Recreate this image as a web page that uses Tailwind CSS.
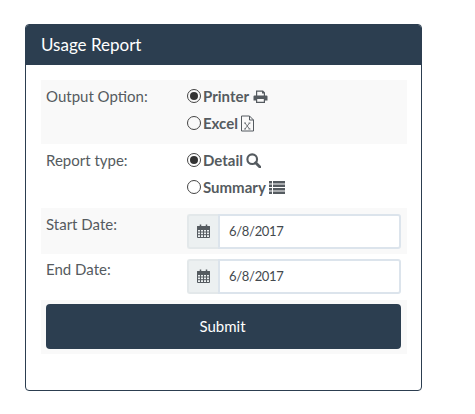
<!DOCTYPE html>
<html lang="en">
<head>
<meta charset="UTF-8">
<title>Usage Report</title>
<script src="https://cdn.jsdelivr.net/npm/@tailwindcss/browser@4"></script>
</head>
<body class="bg-white font-['Lato',sans-serif] text-[15px] text-[#555b60]">
<div class="pt-[24px] pl-[25px]">
  <div class="w-[397px] h-[367px] rounded-[4px] border border-[#2c3e50] bg-white overflow-hidden">
    <div class="h-[40px] bg-[#2c3e50] pl-[15px] text-[17px] leading-[40px] text-white">Usage Report</div>

    <div class="pt-[15px] pl-[15px] w-[381px]">
      <!-- output option -->
      <div class="flex h-[64px] bg-[#f9f9f9] pl-[5px]">
        <div class="w-[141px] pt-[6px] leading-[20px]">Output Option:</div>
        <div>
          <div class="flex items-center h-[20px] mt-[6px] font-bold">
            <span class="w-[14px] h-[14px] rounded-full border border-[#444] flex items-center justify-center mr-[2px]"><span class="w-[8px] h-[8px] rounded-full bg-[#333]"></span></span>
            Printer
            <svg class="ml-[4px] w-[15px] h-[15px]" viewBox="0 0 15 14" fill="#555b60"><path d="M3 1h7l2 2v3h-1.200V4H9V2.200H4.200V6H3zM1.500 6h12a1 1 0 0 1 1 1v4h-2.500v2.500H3V11H.5V7a1 1 0 0 1 1-1zM4.200 9.500v2.800h6.600V9.500z"/></svg>
          </div>
          <div class="flex items-center h-[20px] mt-[7px] font-bold">
            <span class="w-[14px] h-[14px] rounded-full border border-[#444] mr-[2px]"></span>
            Excel
            <svg class="ml-[2px] w-[15px] h-[17px]" viewBox="0 0 15 17" fill="none" stroke="#555b60" stroke-width="1"><path d="M1.500 1h8l4 4v11h-12zM9.500 1v4h4"/><path d="M5 8l4.500 6M9.500 8L5 14M4 14h2M8.500 14h2M4 8h2M8.500 8h2" stroke-width=".8"/></svg>
          </div>
        </div>
      </div>

      <!-- report type -->
      <div class="flex h-[64px] pl-[5px]">
        <div class="w-[141px] pt-[6px] leading-[20px]">Report type:</div>
        <div>
          <div class="flex items-center h-[20px] mt-[6px] font-bold">
            <span class="w-[14px] h-[14px] rounded-full border border-[#444] flex items-center justify-center mr-[2px]"><span class="w-[8px] h-[8px] rounded-full bg-[#333]"></span></span>
            Detail
            <svg class="ml-[3px] w-[15px] h-[15px]" viewBox="0 0 14 14" fill="none" stroke="#555b60" stroke-width="2"><circle cx="5.800" cy="5.800" r="4.500"/><path d="M9 9l4 4" stroke-width="2.600" stroke-linecap="round"/></svg>
          </div>
          <div class="flex items-center h-[20px] mt-[7px] font-bold">
            <span class="w-[14px] h-[14px] rounded-full border border-[#444] mr-[2px]"></span>
            Summary
            <svg class="ml-[3px] w-[16px] h-[13px]" viewBox="0 0 16 13" fill="#555b60"><path d="M0 0h3v2.500H0zM4 0h12v2.500H4zM0 3.500h3V6H0zM4 3.500h12V6H4zM0 7h3v2.500H0zM4 7h12v2.500H4zM0 10.500h3V13H0zM4 10.500h12V13H4z"/></svg>
          </div>
        </div>
      </div>

      <!-- start date -->
      <div class="flex h-[46px] bg-[#f9f9f9] pl-[5px]">
        <div class="w-[141px] pt-[6px] leading-[20px]">Start Date:</div>
        <div class="flex mt-[6px] h-[35px] w-[214px]">
          <div class="w-[31px] flex items-center justify-center bg-[#ecf0f1] border-2 border-r-0 border-[#e3e8ea] rounded-l-[3px] pb-[2px]">
            <svg class="w-[13px] h-[14px]" viewBox="0 0 13 14" fill="none" stroke="#555b60"><path d="M.5 2.500h12v11H.5zM.5 5.500h12M.5 8h12M.5 10.700h12M3.500 5.500v8M6.500 5.500v8M9.500 5.500v8"/><path d="M.5 2.500h12v3H.5z" fill="#555b60"/><path d="M3.500 .5v3M9.500 .5v3" stroke-width="1.500"/></svg>
          </div>
          <div class="flex-1 flex items-center bg-white border-2 border-[#dce4ec] rounded-r-[3px] pl-[9px] text-[13px] tracking-[-0.3px] text-[#44494e]">6/8/2017</div>
        </div>
      </div>

      <!-- end date -->
      <div class="flex h-[46px] pl-[5px]">
        <div class="w-[141px] pt-[5px] leading-[20px]">End Date:</div>
        <div class="flex mt-[5px] h-[35px] w-[214px]">
          <div class="w-[31px] flex items-center justify-center bg-[#ecf0f1] border-2 border-r-0 border-[#e3e8ea] rounded-l-[3px] pb-[2px]">
            <svg class="w-[13px] h-[14px]" viewBox="0 0 13 14" fill="none" stroke="#555b60"><path d="M.5 2.500h12v11H.5zM.5 5.500h12M.5 8h12M.5 10.700h12M3.500 5.500v8M6.500 5.500v8M9.500 5.500v8"/><path d="M.5 2.500h12v3H.5z" fill="#555b60"/><path d="M3.500 .5v3M9.500 .5v3" stroke-width="1.500"/></svg>
          </div>
          <div class="flex-1 flex items-center bg-white border-2 border-[#dce4ec] rounded-r-[3px] pl-[9px] text-[13px] tracking-[-0.3px] text-[#44494e]">6/8/2017</div>
        </div>
      </div>

      <!-- submit -->
      <div class="bg-[#f9f9f9] h-[54px] pl-[5px] pt-[4px]">
        <button class="w-[355px] h-[45px] rounded-[4px] bg-[#2c3e50] text-white text-[15px] pr-[2px] pb-[1px]">Submit</button>
      </div>
    </div>
  </div>
</div>
</body>
</html>
